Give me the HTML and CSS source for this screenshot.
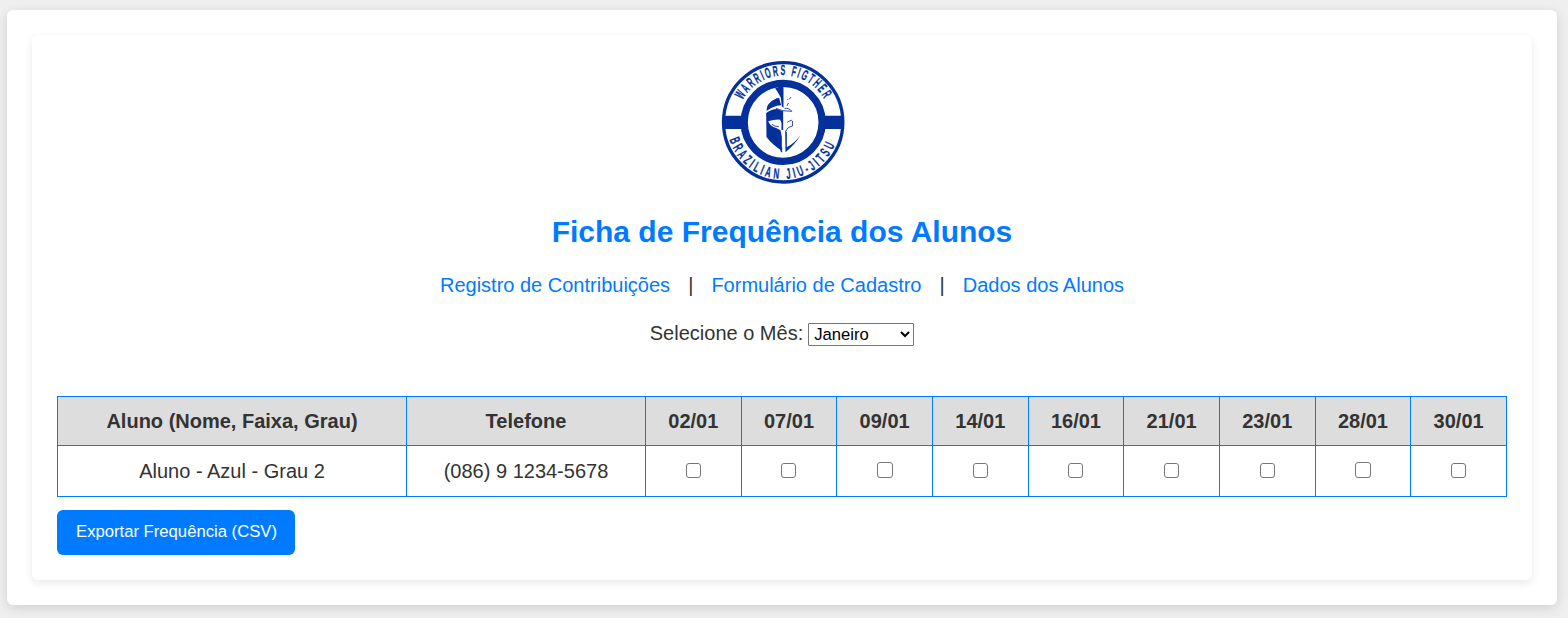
FILE: index.html
```html
<!DOCTYPE html>
<html lang="pt-BR">
<head>
<meta charset="utf-8">
<title>Ficha de Frequência dos Alunos</title>
<link rel="stylesheet" href="styles.css">
</head>
<body>
<main class="page">
<section class="card">
  <svg class="logo" viewBox="22.5 24 375 375" role="img" aria-label="Warriors Figther Brazilian Jiu-Jitsu">
    <defs>
      <path id="arc-top" d="M90.8 144A139 139 0 0 1 340 152"/>
      <path id="arc-bottom" d="M50.5 262A169 169 0 0 0 373.5 262"/>
    </defs>
    <circle class="ring" cx="212" cy="211" r="179" stroke-width="10"/>
    <path class="ink" d="M32 191H392V231H32Z"/>
    <circle class="ring ring-inner" cx="212" cy="211" r="117" stroke-width="22"/>
    <text class="motto motto-top"><textPath href="#arc-top" textLength="302" lengthAdjust="spacingAndGlyphs">WARRIORS FIGTHER</textPath></text>
    <text class="motto motto-bottom"><textPath href="#arc-bottom" textLength="420" lengthAdjust="spacingAndGlyphs">BRAZILIAN JIU-JITSU</textPath></text>
    <path class="ink" d="M188 109L210 101L213 106V168L208 163L205 137L196 121Z"/>
    <path class="ink" d="M192 139L200 138L206 160L193 161Q176 166 162 177Q160 154 192 139Z"/>
    <path class="ink" d="M161 183Q178 171 193 171L212 178V234H207V213L203 203Q184 202 167 208Q173 223 191 228L204 235L208 255V296Q180 279 162 255Z"/>
    <path class="detail" d="M190 169L211 176L238 178Q230 167 216 169M239 204L229 208L224 211M240 207L240 222Q223 226 221 237M224 142H227M228 153L223 162M236 135L230 142M178 217Q186 224 199 224"/>
    <path class="ink" d="M218 235L223 241V286Q245 275 264 250Q248 277 219 301Z"/>
    <path class="ink" d="M204 280L209 288V302L204 298Z"/>
  </svg>
  <h1 class="title">Ficha de Frequência dos Alunos</h1>
  <nav class="nav">
    <a class="link" href="#">Registro de Contribuições</a><span class="sep">|</span><a class="link" href="#">Formulário de Cadastro</a><span class="sep">|</span><a class="link" href="#">Dados dos Alunos</a>
  </nav>
  <div class="month">
    <label for="mes">Selecione o Mês:</label>
    <select class="select" id="mes"><option>Janeiro</option><option>Fevereiro</option><option>Março</option></select>
  </div>
  <table class="table">
    <colgroup><col class="c-name"><col class="c-phone"><col span="9"></colgroup>
    <thead><tr><th>Aluno (Nome, Faixa, Grau)</th><th>Telefone</th><th>02/01</th><th>07/01</th><th>09/01</th><th>14/01</th><th>16/01</th><th>21/01</th><th>23/01</th><th>28/01</th><th>30/01</th></tr></thead>
    <tbody><tr><td>Aluno - Azul - Grau 2</td><td>(086) 9 1234-5678</td><td><input class="check" type="checkbox"></td><td><input class="check" type="checkbox"></td><td><input class="check check-wide" type="checkbox"></td><td><input class="check" type="checkbox"></td><td><input class="check" type="checkbox"></td><td><input class="check" type="checkbox"></td><td><input class="check" type="checkbox"></td><td><input class="check check-wide" type="checkbox"></td><td><input class="check" type="checkbox"></td></tr></tbody>
  </table>
  <button class="export" type="button">Exportar Frequência (CSV)</button>
</section>
</main>
</body>
</html>
```
FILE: styles.css
```css
* { box-sizing: border-box; }
body {
  margin: 0;
  height: 618px;
  padding: 10px 11px 13px 7px;
  overflow: hidden;
  background: #efefef;
  color: #333;
  font: 20px/30px "Liberation Sans", Arial, sans-serif;
}
.page {
  height: 595px;
  padding: 25px;
  border-radius: 6px;
  background: #fff;
  box-shadow: 0 3px 12px rgba(0, 0, 0, .13);
}
.card {
  display: flex;
  flex-direction: column;
  align-items: center;
  height: 545px;
  padding: 25px;
  border-radius: 6px;
  background: #fff;
  box-shadow: 0 3px 8px rgba(0, 0, 0, .09);
}
.logo { display: block; width: 125px; height: 125px; }
.ink { fill: #03309b; }
.ring { fill: none; stroke: #03309b; }
.ring-inner { fill: #fff; }
.detail { fill: none; stroke: #03309b; stroke-width: 2.5; }
.motto { fill: #03309b; stroke: #03309b; stroke-width: .8; font: bold 44px "Liberation Sans", sans-serif; }
.motto-top { letter-spacing: 11px; }
.motto-bottom { letter-spacing: 17px; }
.title {
  margin: 24px 0 0;
  color: #007bff;
  font-size: 30px;
  line-height: 45px;
}
.nav { display: flex; margin-top: 16px; }
.link { color: #007bff; text-decoration: none; }
.sep { width: 41.3px; text-align: center; }
.month { display: flex; align-items: center; gap: 5px; margin-top: 18px; }
.select {
  width: 106px;
  height: 23px;
  margin-top: 3px;
  padding: 0 1px;
  border: 1px solid #767676;
  border-radius: 1px;
  background-color: #fff;
  color: #000;
  font: 16.667px "Liberation Sans", Arial, sans-serif;
}
.table {
  width: 1450px;
  margin-top: 48px;
  border-collapse: collapse;
  table-layout: fixed;
  text-align: center;
}
.c-name { width: 349px; }
.c-phone { width: 239px; }
.table th, .table td { padding: 0; border: 1px solid #007bff; }
.table th { height: 49px; background: #ddd; }
.table td { height: 51px; }
.check {
  display: block;
  width: 15px;
  height: 15px;
  margin: -2px auto 0;
  border: 1px solid #767676;
  border-radius: 3px;
  background: #fff;
  appearance: none;
}
.check-wide { width: 16px; height: 16px; }
.export {
  align-self: flex-start;
  width: 238px;
  height: 45px;
  margin-top: 13px;
  padding: 0 0 2px 1px;
  border: 0;
  border-radius: 6px;
  background: #007bff;
  color: #fff;
  font: 16.667px "Liberation Sans", Arial, sans-serif;
}
```
